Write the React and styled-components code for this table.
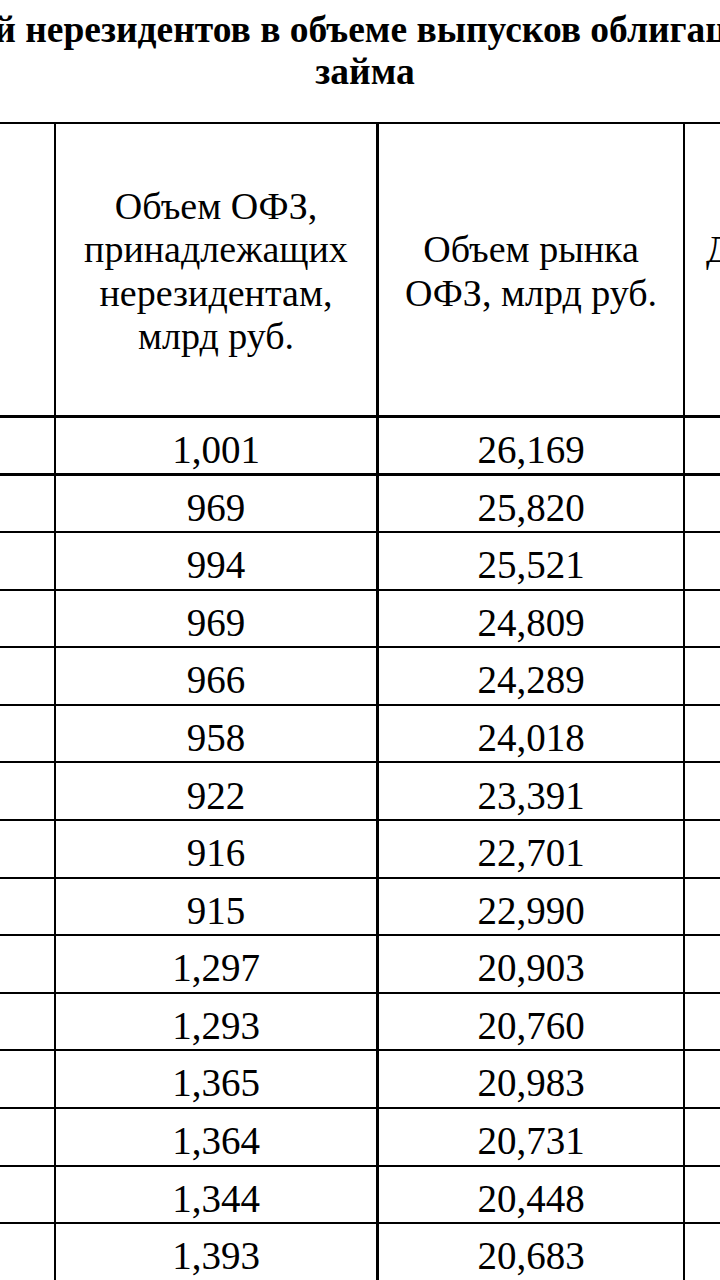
import styled, { createGlobalStyle } from 'styled-components'

const serif = `"Liberation Serif", "Times New Roman", serif`

const GlobalStyle = createGlobalStyle`
  html, body {
    margin: 0;
    padding: 0;
    background: #fff;
  }
  body {
    font-family: ${serif};
    color: #000;
  }
`

const Page = styled.div`
  width: 720px;
  height: 1280px;
  overflow: hidden;
  background: #fff;
`

const Title = styled.h1`
  margin: 0 0 0 -380px;
  width: 1490px;
  padding-top: 9px;
  font-family: ${serif};
  font-weight: bold;
  font-size: 37.5px;
  line-height: 42px;
  text-align: center;
  white-space: nowrap;
  color: #000;
`

const Table = styled.div`
  margin: 29px 0 0 -345px;
  width: max-content;
  border-top: 2px solid #000;
`

const Row = styled.div`
  display: flex;
  box-sizing: border-box;
  height: ${p => p.$h}px;
  border-bottom: ${p => p.$thick ? 3 : 2}px solid #000;
`

const Cell = styled.div`
  box-sizing: border-box;
  flex: none;
  width: ${p => p.$w}px;
  border-right: ${p => p.$b}px solid #000;
  display: flex;
  align-items: center;
  justify-content: ${p => p.$left ? 'flex-start' : 'center'};
  padding: ${p => p.$left ? '0 0 0 21px' : '0'};
  text-align: center;
  font-family: ${serif};
  font-size: 38px;
  line-height: 43.5px;
`

const HeadBlock = styled.span`
  display: inline-block;
  padding-top: 4px;
  text-align: center;
  white-space: nowrap;
`

const Num = styled.span`
  font-size: 39px;
  padding-top: 8px;
`

const cols = [
  { w: 401, b: 2 },
  { w: 323, b: 3 },
  { w: 306, b: 2 },
  { w: 400, b: 2 },
]

const data = [
  [1001, 26169],
  [969, 25820],
  [994, 25521],
  [969, 24809],
  [966, 24289],
  [958, 24018],
  [922, 23391],
  [916, 22701],
  [915, 22990],
  [1297, 20903],
  [1293, 20760],
  [1365, 20983],
  [1364, 20731],
  [1344, 20448],
  [1393, 20683],
]

const fmt = n => n.toLocaleString('en-US')

export default function App() {
  return (
    <Page>
      <GlobalStyle />
      <Title>
        1. Доля вложений нерезидентов в объеме выпусков облигаций федерального
        <br />
        займа
      </Title>
      <Table>
        <Row $h={294} $thick>
          <Cell $w={cols[0].w} $b={cols[0].b} />
          <Cell $w={cols[1].w} $b={cols[1].b}>
            <HeadBlock>Объем ОФЗ,<br />принадлежащих<br />нерезидентам,<br />млрд руб.</HeadBlock>
          </Cell>
          <Cell $w={cols[2].w} $b={cols[2].b}>
            <HeadBlock>Объем рынка<br />ОФЗ, млрд руб.</HeadBlock>
          </Cell>
          <Cell $w={cols[3].w} $b={cols[3].b} $left>
            <HeadBlock>Доля нерезидентов,<br />%</HeadBlock>
          </Cell>
        </Row>
        {data.map(([a, b], i) => (
          <Row key={i} $h={i === 0 ? 57.5 : 57.6} $thick={i === 0}>
            <Cell $w={cols[0].w} $b={cols[0].b} />
            <Cell $w={cols[1].w} $b={cols[1].b}><Num>{fmt(a)}</Num></Cell>
            <Cell $w={cols[2].w} $b={cols[2].b}><Num>{fmt(b)}</Num></Cell>
            <Cell $w={cols[3].w} $b={cols[3].b}><Num>{(a / b * 100).toFixed(1)}</Num></Cell>
          </Row>
        ))}
      </Table>
    </Page>
  )
}
